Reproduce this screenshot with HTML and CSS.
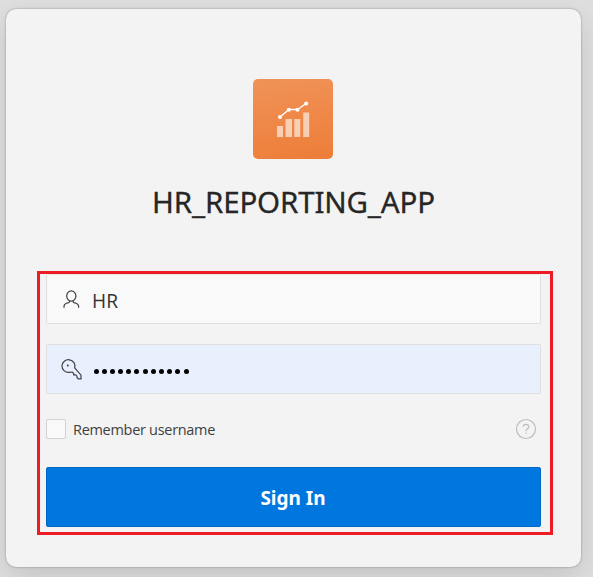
FILE: index.html
```html
<!DOCTYPE html>
<html lang="en">
<head>
<meta charset="utf-8">
<title>HR_REPORTING_APP</title>
<link rel="stylesheet" href="styles.css">
</head>
<body>
<main class="card">
  <svg class="logo" viewBox="0 0 80 80" aria-hidden="true">
    <g fill="#fff" fill-opacity=".6"><path d="M24 47h6v11h-6zM32.500 40h6.500v18h-6.500zM41.300 40h6v18h-6zM50.200 33.500h6v24.500h-6z"/></g>
    <path d="M27 38l9-7.500h8.500l8.700-6" fill="none" stroke="#fff" stroke-width="1.300"/>
    <g fill="#fff"><circle cx="27" cy="38" r="2"/><circle cx="35.800" cy="30.700" r="2"/><circle cx="44.500" cy="30.700" r="2"/><circle cx="53.200" cy="24.500" r="2"/></g>
  </svg>
  <h1 class="title">HR_REPORTING_APP</h1>
  <form class="login">
    <label class="field field-user">
      <svg class="icon" viewBox="0 0 22 22"><ellipse cx="11.300" cy="8" rx="4.600" ry="5.200"/><path d="M4 19.800v-1.200q0-2.400 2.500-3.300l2.200-.7q1-.4 1-1.800M18.600 19.800v-1.200q0-2.400-2.500-3.300l-2.200-.7q-1-.4-1-1.800"/></svg>
      <span class="value">HR</span>
    </label>
    <label class="field field-password">
      <svg class="icon" viewBox="0 0 22 22"><path d="M14.700 9.800a6.500 6.300 0 1 0-5.600 4.500l3.200-.3 1.400 1.500v1.400h2l1.300 1.300v1.500l1.300 1.200h2.700v-3.700z"/><circle class="hole" cx="7.800" cy="7.500" r="1"/></svg>
      <span class="dots"><i></i><i></i><i></i><i></i><i></i><i></i><i></i><i></i><i></i><i></i><i></i><i></i></span>
    </label>
    <div class="options">
      <span class="box"></span>
      <span class="remember">Remember username</span>
      <svg class="help" viewBox="0 0 22 22"><circle cx="11" cy="11" r="9.500"/><path d="M8.300 8.800q0-2.500 2.700-2.500t2.700 2.400q0 1.200-1.300 2.100T11 13.200"/><path d="M11 14.800v1.300"/></svg>
    </div>
    <button class="submit" type="button">Sign In</button>
  </form>
</main>
</body>
</html>
```
FILE: styles.css
```css
* { box-sizing: border-box; }
html { height: 100%; overflow: hidden; }
body {
  margin: 0;
  height: 577px;
  padding: 9px 12px 10px 6px;
  overflow: hidden;
  background: #dfdfdf;
  font-family: "Noto Sans", "Open Sans", sans-serif;
  color: #262626;
}
.card {
  height: 558px;
  padding: 70px 28px 0 31px;
  display: flex;
  flex-direction: column;
  align-items: center;
  background: #f3f3f3;
  border-radius: 10px;
  box-shadow: 0 0 2px rgba(0, 0, 0, .4), 0 10px 30px rgba(0, 0, 0, .13);
}
.logo {
  width: 80px;
  height: 80px;
  margin-right: 4px;
  border-radius: 5px;
  background: linear-gradient(170deg, #f09358, #ed7d38);
}
.title {
  margin: 22px 3px 0 0;
  height: 42px;
  font-size: 29.500px;
  line-height: 42px;
  font-weight: 400;
  letter-spacing: -.15px;
  white-space: nowrap;
  -webkit-text-stroke: .3px #262626;
}
.login {
  width: 516px;
  height: 264px;
  margin-top: 48px;
  border: 3px solid #ed1c24;
  padding: 0 9px 0 6px;
}
.field {
  display: flex;
  align-items: center;
  height: 50px;
  padding-left: 13px;
  border: 1px solid #dfdfdf;
  border-radius: 2px;
  background: #f9f9f9;
}
.field-user { border-top-color: #e7e7e7; }
.field-password { margin-top: 20px; background: #e8effd; }
.icon {
  width: 22px;
  height: 22px;
  margin-right: 10px;
  fill: none;
  stroke: #404040;
  stroke-width: 1.200;
}
.hole { fill: #404040; stroke: none; }
.value { font: 400 19.200px/30px "Open Sans", "Noto Sans", sans-serif; padding-top: 3px; color: #333; }
.dots { display: flex; gap: 3.200px; padding: 4px 0 0 1.500px; }
.dots i { width: 5px; height: 5px; border-radius: 50%; background: #000; }
.options {
  display: flex;
  align-items: center;
  height: 20px;
  margin-top: 25px;
}
.box {
  width: 20px;
  height: 20px;
  border: 1px solid #d3d3d3;
  border-radius: 2px;
  background: #f9f9f9;
}
.remember {
  margin-left: 7px;
  padding-top: 1px;
  font: 400 14.500px/20px "Open Sans", "Noto Sans", sans-serif;
  letter-spacing: -.3px;
  white-space: nowrap;
  color: #404040;
}
.help {
  width: 22px;
  height: 22px;
  margin: 0 4.500px 0 auto;
  fill: none;
  stroke: #bdbdbd;
  stroke-width: 1.200;
}
.submit {
  display: block;
  width: 100%;
  height: 60px;
  margin-top: 28px;
  padding: 2px 1px 0 0;
  border: 1px solid #0067c5;
  border-radius: 2px;
  background: #0076df;
  color: #fff;
  font: 700 19px/28px "Noto Sans", "Open Sans", sans-serif;
}
```
